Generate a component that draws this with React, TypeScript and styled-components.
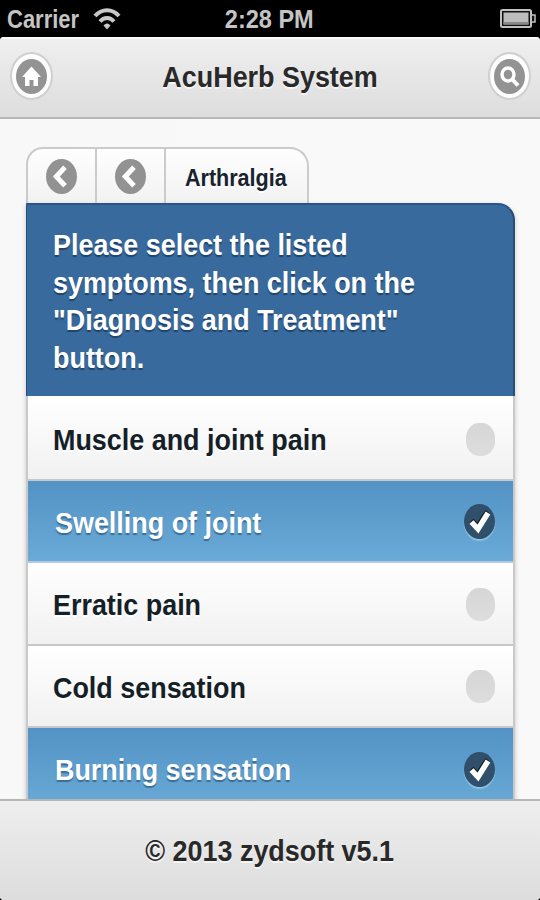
import React from 'react';
import styled, { createGlobalStyle, css } from 'styled-components';

const GlobalStyle = createGlobalStyle`
  * { box-sizing: border-box; }
  body {
    margin: 0;
    background: #000;
    font-family: "Liberation Sans", Arial, Helvetica, sans-serif;
    font-weight: bold;
  }
`;

const Screen = styled.div`
  width: 540px;
  height: 900px;
  display: flex;
  flex-direction: column;
  overflow: hidden;
  background: #000;
`;

const Condensed = styled.span<{ $scale?: number; $origin?: string }>`
  display: inline-block;
  white-space: nowrap;
  transform: scaleX(${(p) => p.$scale ?? 0.897});
  transform-origin: ${(p) => p.$origin ?? 'left'} center;
`;

const StatusBar = styled.div`
  flex: none;
  height: 37px;
  display: grid;
  grid-template-columns: 1fr auto 1fr;
  align-items: center;
  padding: 1px 8px 0 7px;
  color: #c4c4c4;
  font-size: 25px;
  line-height: 34px;

  svg { display: block; }
`;

const Clock = styled.div`
  display: flex;
  justify-content: center;
`;

const BatterySlot = styled.div`
  display: flex;
  justify-content: flex-end;
  margin-right: -4px;
`;

const StatusLeft = styled.div`
  display: grid;
  grid-template-columns: 86px auto;
  align-items: center;
`;

const Window = styled.div`
  flex: 1;
  min-height: 0;
  display: flex;
  flex-direction: column;
  overflow: hidden;
  border-radius: 4px;
  background: linear-gradient(to right, #f8f8f8, #f9f9f9);
`;

const Header = styled.header`
  flex: none;
  height: 82px;
  display: flex;
  align-items: center;
  justify-content: space-between;
  padding: 0 9px 4px 10px;
  border-top: 2px solid #fbfbfb;
  border-bottom: 2px solid #b8b8b8;
  background: linear-gradient(#efefef, #dddddd);
`;

const Title = styled.h1`
  margin: 0;
  padding-top: 1px;
  font-size: 30px;
  line-height: 38px;
  color: #292929;
  text-shadow: 0 2px 0 #f4f4f4;
`;

const RoundButton = styled.button`
  flex: none;
  width: 43px;
  height: 48px;
  display: flex;
  align-items: center;
  justify-content: center;
  padding: 0;
  border: 2px solid #cfcfcf;
  border-radius: 50%;
  background: #fdfdfd;
`;

const Content = styled.main`
  flex: 1;
  min-height: 0;
  overflow: hidden;
  padding: 28px 25px 0 26px;
`;

const Tabs = styled.div`
  display: flex;
  width: 283px;
  height: 56px;
  border: 2px solid #cbcbcb;
  border-bottom: 0;
  border-radius: 17px 19px 0 0;
  background: linear-gradient(#fefefe, #f2f2f2);
  overflow: hidden;
`;

const Tab = styled.div<{ $label?: boolean }>`
  flex: none;
  width: 69px;
  display: flex;
  align-items: center;
  justify-content: center;
  padding: 1px 0 0;
  border-right: 2px solid #cbcbcb;
  font-size: 24px;
  color: #18232d;
  text-shadow: 0 2px 0 #fff;

  ${(p) =>
    p.$label &&
    css`
      flex: 1;
      justify-content: flex-start;
      padding: 4px 0 0 19px;
      border-right: 0;
    `}
`;

const Panel = styled.section`
  width: 489px;
  box-shadow: 0 2px 5px rgba(0, 0, 0, 0.2);
  border-radius: 0 17px 0 0;
`;

const Prompt = styled.div`
  height: 193px;
  padding: 21px 0 0 26px;
  border: 1px solid #284e73;
  border-width: 2px 2px 0 1px;
  border-color: #28558a #284e73;
  border-radius: 0 17px 0 0;
  background: #396a9d;
  color: #fff;
  font-size: 30px;
  line-height: 37.5px;
  text-shadow: 0 2px 1px #20446a;
`;

const List = styled.ul`
  margin: 0;
  padding: 2px 0 0;
  list-style: none;
  border: solid #c9c9c9;
  border-width: 0 2px;
  background: #fff;
`;

const Row = styled.li<{ $checked: boolean }>`
  height: 82.5px;
  display: flex;
  align-items: center;
  justify-content: space-between;
  padding: 4px 18px 0 25px;
  border-bottom: 2px solid #c6c8ca;
  background: linear-gradient(#ffffff, #f1f1f1);
  color: #151f28;
  font-size: 30px;
  line-height: 38px;
  text-shadow: 0 2px 0 #fff;

  ${(p) =>
    p.$checked &&
    css`
      padding-left: 27px;
      border-bottom-color: #b3cbdc;
      background: linear-gradient(#5393c5, #6aaad7);
      color: #fff;
      text-shadow: 0 2px 1px #3a6d96;
    `}
`;

const Mark = styled.span<{ $checked: boolean }>`
  flex: none;
  width: ${(p) => (p.$checked ? 31 : 29)}px;
  height: ${(p) => (p.$checked ? 35 : 33)}px;
  margin-top: -2px;
  border-radius: ${(p) => (p.$checked ? '50%' : '13px / 15px')};
  background: ${(p) => (p.$checked ? '#304f6a' : 'linear-gradient(#d6d6d6, #dddddd)')};
  box-shadow: ${(p) => (p.$checked ? '0 2px 1px #8fc0e0' : 'none')};
  svg { display: block; }
`;

const Footer = styled.footer`
  flex: none;
  height: 101px;
  display: flex;
  justify-content: center;
  padding-top: 31px;
  border-top: 2px solid #b6b6b6;
  background: linear-gradient(#eeeeee, #dddddd);
  color: #292929;
  font-size: 30px;
  line-height: 38px;
  text-shadow: 0 2px 0 #f4f4f4;
`;

const WifiIcon = () => (
  <svg width="28" height="24" viewBox="0 0 28 24" fill="none" stroke="#c8c8c8">
    <path d="M2 9C8.500 1.200 19.500 1.200 26 9" strokeWidth="4" />
    <path d="M7 14.500C10.800 9.800 17.200 9.800 21 14.500" strokeWidth="3.800" />
    <path d="M14 22.500L10.500 18.500Q14 14.500 17.500 18.500Z" fill="#c8c8c8" stroke="none" />
  </svg>
);

const BatteryIcon = () => (
  <svg width="36" height="22" viewBox="0 0 36 22">
    <rect x="1" y="2" width="30" height="17" rx="1.500" fill="#111" stroke="#c0c0c0" strokeWidth="2" />
    <rect x="3.500" y="4.500" width="25" height="12" fill="#bcbcbc" />
    <path d="M3.500 14h25v2.500h-25z" fill="#888" />
    <path d="M32 7h3v7h-3" fill="#111" stroke="#c0c0c0" strokeWidth="1.500" />
  </svg>
);

const HomeIcon = () => (
  <svg width="31" height="35" viewBox="0 0 31 35">
    <ellipse cx="15.500" cy="17.500" rx="15.500" ry="17.500" fill="#939393" />
    <path d="M15.500 7.500L25 18h-3v9h-4.500v-6h-4v6H9v-9H6z" fill="#fff" />
  </svg>
);

const SearchIcon = () => (
  <svg width="31" height="35" viewBox="0 0 31 35">
    <ellipse cx="15.500" cy="17.500" rx="15.500" ry="17.500" fill="#939393" />
    <ellipse cx="14" cy="15.500" rx="6" ry="6.500" fill="none" stroke="#fff" strokeWidth="3.400" />
    <path d="M18 20l6 6.500" stroke="#fff" strokeWidth="4" />
  </svg>
);

const BackIcon = () => (
  <svg width="31" height="35" viewBox="0 0 31 35">
    <ellipse cx="15.500" cy="17.500" rx="15.500" ry="17.500" fill="#929292" />
    <path d="M19 8.300L10.300 17.500L19 26.700" fill="none" stroke="#fff" strokeWidth="5" />
  </svg>
);

const CheckIcon = () => (
  <svg width="31" height="35" viewBox="0 0 31 35">
    <path d="M7.500 16.500l6 6L23.500 7.500" fill="none" stroke="#14202b" strokeWidth="5" />
    <path d="M7.500 18l6.500 7L24 9" fill="none" stroke="#fff" strokeWidth="5.400" />
  </svg>
);

const symptoms = [
  { name: 'Muscle and joint pain', checked: false },
  { name: 'Swelling of joint', checked: true },
  { name: 'Erratic pain', checked: false },
  { name: 'Cold sensation', checked: false },
  { name: 'Burning sensation', checked: true },
];

const promptLines = [
  'Please select the listed',
  'symptoms, then click on the',
  '"Diagnosis and Treatment"',
  'button.',
];

export default function App() {
  return (
    <>
      <GlobalStyle />
      <Screen>
        <StatusBar>
          <StatusLeft>
            <Condensed $scale={0.88}>Carrier</Condensed>
            <WifiIcon />
          </StatusLeft>
          <Clock>
            <Condensed $scale={0.94} $origin="center">2:28 PM</Condensed>
          </Clock>
          <BatterySlot><BatteryIcon /></BatterySlot>
        </StatusBar>
        <Window>
          <Header>
            <RoundButton aria-label="Home"><HomeIcon /></RoundButton>
            <Title><Condensed $origin="center">AcuHerb System</Condensed></Title>
            <RoundButton aria-label="Search"><SearchIcon /></RoundButton>
          </Header>
          <Content>
            <Tabs>
              <Tab><BackIcon /></Tab>
              <Tab><BackIcon /></Tab>
              <Tab $label><Condensed>Arthralgia</Condensed></Tab>
            </Tabs>
            <Panel>
              <Prompt>
                {promptLines.map((line) => (
                  <div key={line}><Condensed>{line}</Condensed></div>
                ))}
              </Prompt>
              <List>
                {symptoms.map(({ name, checked }) => (
                  <Row key={name} $checked={checked}>
                    <Condensed>{name}</Condensed>
                    <Mark $checked={checked}>{checked && <CheckIcon />}</Mark>
                  </Row>
                ))}
              </List>
            </Panel>
          </Content>
          <Footer><Condensed $origin="center">© 2013 zydsoft v5.1</Condensed></Footer>
        </Window>
      </Screen>
    </>
  );
}
